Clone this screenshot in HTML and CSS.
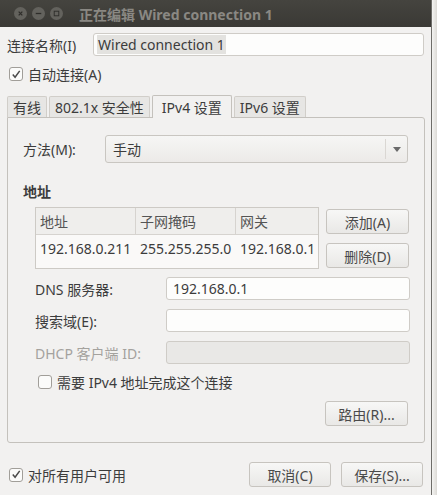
FILE: index.html
```html
<!DOCTYPE html>
<html lang="zh-CN">
<head>
  <meta charset="UTF-8" />
  <title>正在编辑 Wired connection 1</title>
  <link rel="stylesheet" href="styles.css">
</head>
<body>
  <div class="window">
    <div class="titlebar">
      <div class="wm-buttons">
        <span class="wm-btn">
          <svg width="12" height="12" viewBox="0 0 12 12"><path d="M4 4 L8 8 M8 4 L4 8" stroke="#2e2d2a" stroke-width="1.4"/></svg>
        </span>
        <span class="wm-btn">
          <svg width="12" height="12" viewBox="0 0 12 12"><path d="M3 6 H9" stroke="#2e2d2a" stroke-width="1.4"/></svg>
        </span>
        <span class="wm-btn">
          <svg width="12" height="12" viewBox="0 0 12 12"><rect x="3.5" y="3.5" width="5" height="5" fill="none" stroke="#2e2d2a" stroke-width="1"/></svg>
        </span>
      </div>
      <div class="title">正在编辑 Wired connection 1</div>
    </div>

    <div class="content">
      <div class="name-row">
        <label class="name-label">连接名称(I)</label>
        <div class="entry name-entry"><span class="selected">Wired connection 1</span></div>
      </div>

      <div class="check-row auto-row">
        <span class="checkbox checked">
          <svg width="13" height="13" viewBox="0 0 13 13"><path d="M3 6.5 L5.5 9.5 L10.5 2.5" fill="none" stroke="#4a4a4a" stroke-width="1.6"/></svg>
        </span>
        <span>自动连接(A)</span>
      </div>

      <div class="tabs">
        <div class="tab">有线</div>
        <div class="tab">802.1x 安全性</div>
        <div class="tab active">IPv4 设置</div>
        <div class="tab">IPv6 设置</div>
      </div>

      <div class="panel">
        <div class="method-row">
          <span class="method-label">方法(M):</span>
          <div class="combo">
            <span class="combo-text">手动</span>
            <span class="combo-arrow">
              <svg width="8" height="5" viewBox="0 0 8 5"><path d="M0 0 H8 L4 5 Z" fill="#6a6a6a"/></svg>
            </span>
          </div>
        </div>

        <div class="section-title">地址</div>

        <div class="address-block">
          <div class="addr-table">
            <div class="addr-head">
              <div class="cell">地址</div>
              <div class="cell">子网掩码</div>
              <div class="cell">网关</div>
            </div>
            <div class="addr-row">
              <div class="cell">192.168.0.211</div>
              <div class="cell">255.255.255.0</div>
              <div class="cell">192.168.0.1</div>
            </div>
          </div>
          <div class="addr-buttons">
            <button class="btn">添加(A)</button>
            <button class="btn">删除(D)</button>
          </div>
        </div>

        <div class="form-grid">
          <label>DNS 服务器:</label>
          <div class="entry">192.168.0.1</div>
          <label>搜索域(E):</label>
          <div class="entry"></div>
          <label class="disabled">DHCP 客户端 ID:</label>
          <div class="entry disabled"></div>
        </div>

        <div class="check-row require-row">
          <span class="checkbox"></span>
          <span>需要 IPv4 地址完成这个连接</span>
        </div>

        <div class="route-row">
          <button class="btn">路由(R)...</button>
        </div>
      </div>

      <div class="footer">
        <div class="check-row">
          <span class="checkbox checked">
            <svg width="13" height="13" viewBox="0 0 13 13"><path d="M3 6.5 L5.5 9.5 L10.5 2.5" fill="none" stroke="#4a4a4a" stroke-width="1.6"/></svg>
          </span>
          <span>对所有用户可用</span>
        </div>
        <div class="footer-buttons">
          <button class="btn">取消(C)</button>
          <button class="btn">保存(S)...</button>
        </div>
      </div>
    </div>
  </div>
  <div class="desktop-edge"></div>
</body>
</html>
```

FILE: styles.css
```css
:root {
  --bg: #f2f1f0;
  --text: #3c3c3c;
  --border: #c4c1bc;
  --title-bg: #3d3c38;
}

* {
  box-sizing: border-box;
}

body {
  margin: 0;
  width: 437px;
  height: 495px;
  display: flex;
  overflow: hidden;
  background: #e9e8e6;
  font-family: "Noto Sans", "Noto Sans CJK SC", sans-serif;
  font-size: 14px;
  color: var(--text);
}

.window {
  width: 432px;
  height: 495px;
  background: var(--bg);
  border-right: 1px solid #6e6d69;
  display: flex;
  flex-direction: column;
}

.desktop-edge {
  flex: 1;
  background: linear-gradient(to right, #f4f4f2, #dcdad6);
}

.titlebar {
  height: 27px;
  background: linear-gradient(to bottom, #45443f, #3a3935);
  display: flex;
  align-items: center;
  padding-left: 14px;
}

.wm-buttons {
  display: flex;
  gap: 5px;
}

.wm-btn {
  width: 13px;
  height: 13px;
  border-radius: 50%;
  background: #63625d;
  display: flex;
  align-items: center;
  justify-content: center;
}

.wm-btn svg {
  width: 11px;
  height: 11px;
}

.title {
  margin-left: 16px;
  color: #8a8883;
  font-weight: bold;
  font-size: 14px;
}

.content {
  padding: 6px 7px 0 7px;
  display: flex;
  flex-direction: column;
}

.name-row {
  display: flex;
  align-items: center;
  height: 23px;
}

.name-label {
  width: 86px;
}

.entry {
  height: 23px;
  background: #fdfdfc;
  border: 1px solid #cfccc7;
  border-radius: 3px;
  padding: 0 6px;
  display: flex;
  align-items: center;
}

.entry.disabled {
  background: #e9e8e6;
}

.name-entry {
  flex: 1;
  padding-left: 3px;
}

.selected {
  background: #e3e2df;
  padding: 0 1px;
}

.check-row {
  display: flex;
  align-items: center;
  gap: 5px;
  height: 20px;
}

.auto-row {
  margin-top: 8px;
  padding-left: 2px;
}

.checkbox {
  width: 14px;
  height: 14px;
  border: 1px solid #a19e99;
  border-radius: 3px;
  background: #fbfbfa;
  display: flex;
  align-items: center;
  justify-content: center;
}

.tabs {
  margin-top: 11px;
  display: flex;
  gap: 2px;
  height: 22px;
  align-items: flex-end;
}

.tab {
  height: 21px;
  padding: 0 5px;
  border: 1px solid #d1cec9;
  border-bottom: none;
  border-radius: 2px 2px 0 0;
  background: #e7e6e4;
  display: flex;
  align-items: center;
}

.tab.active {
  height: 23px;
  margin-bottom: -1px;
  background: var(--bg);
  border-color: var(--border);
  position: relative;
  padding: 0 9px;
}

.panel {
  width: 418px;
  height: 326px;
  border: 1px solid var(--border);
  border-radius: 0 3px 3px 3px;
  padding: 17px 15px 0 15px;
  display: flex;
  flex-direction: column;
}

.method-row {
  display: flex;
  align-items: center;
  height: 28px;
}

.method-label {
  width: 82px;
}

.combo {
  flex: 1;
  margin-right: 1px;
  height: 28px;
  border: 1px solid #c9c6c1;
  border-radius: 3px;
  background: linear-gradient(to bottom, #f6f6f5, #eceae8);
  display: flex;
  align-items: center;
}

.combo-text {
  flex: 1;
  padding-left: 7px;
}

.combo-arrow {
  width: 22px;
  height: 20px;
  border-left: 1px solid #dad7d3;
  display: flex;
  align-items: center;
  justify-content: center;
}

.section-title {
  margin-top: 19px;
  font-weight: bold;
  height: 20px;
  line-height: 20px;
}

.address-block {
  margin-top: 5px;
  padding-left: 12px;
  display: flex;
  gap: 7px;
}

.addr-table {
  width: 285px;
  height: 62px;
  border: 1px solid #cdcac5;
  background: #faf9f8;
}

.addr-head,
.addr-row {
  display: grid;
  grid-template-columns: 100px 100px 1fr;
}

.addr-head {
  height: 27px;
  background: #efeeec;
  border-bottom: 1px solid #d6d3cf;
  color: #555;
}

.addr-head .cell {
  border-right: 1px solid #d6d3cf;
  display: flex;
  align-items: center;
  padding-left: 4px;
}

.addr-head .cell:last-child {
  border-right: none;
}

.addr-row .cell {
  padding: 4px 0 0 4px;
  white-space: nowrap;
}

.addr-buttons {
  display: flex;
  flex-direction: column;
  gap: 9px;
  margin-top: 2px;
}

.btn {
  font: inherit;
  color: #4a4a4a;
  width: 83px;
  height: 25px;
  border: 1px solid #c7c4bf;
  border-radius: 3px;
  background: linear-gradient(to bottom, #f7f7f6, #e9e8e6);
  padding: 0;
}

.form-grid {
  margin-top: 8px;
  padding-left: 12px;
  display: grid;
  grid-template-columns: 131px 244px;
  row-gap: 9px;
  align-items: center;
}

.form-grid .disabled,
label.disabled {
  color: #a4a29e;
}

.require-row {
  margin-top: 8px;
  padding-left: 15px;
}

.route-row {
  margin-top: 9px;
  display: flex;
  justify-content: flex-end;
  padding-right: 1px;
}

.footer {
  margin-top: 19px;
  display: flex;
  justify-content: space-between;
  align-items: center;
  height: 25px;
}

.footer .check-row {
  padding-left: 2px;
}

.footer-buttons {
  display: flex;
  gap: 10px;
  padding-right: 1px;
}

.footer-buttons .btn {
  width: 82px;
}
```
